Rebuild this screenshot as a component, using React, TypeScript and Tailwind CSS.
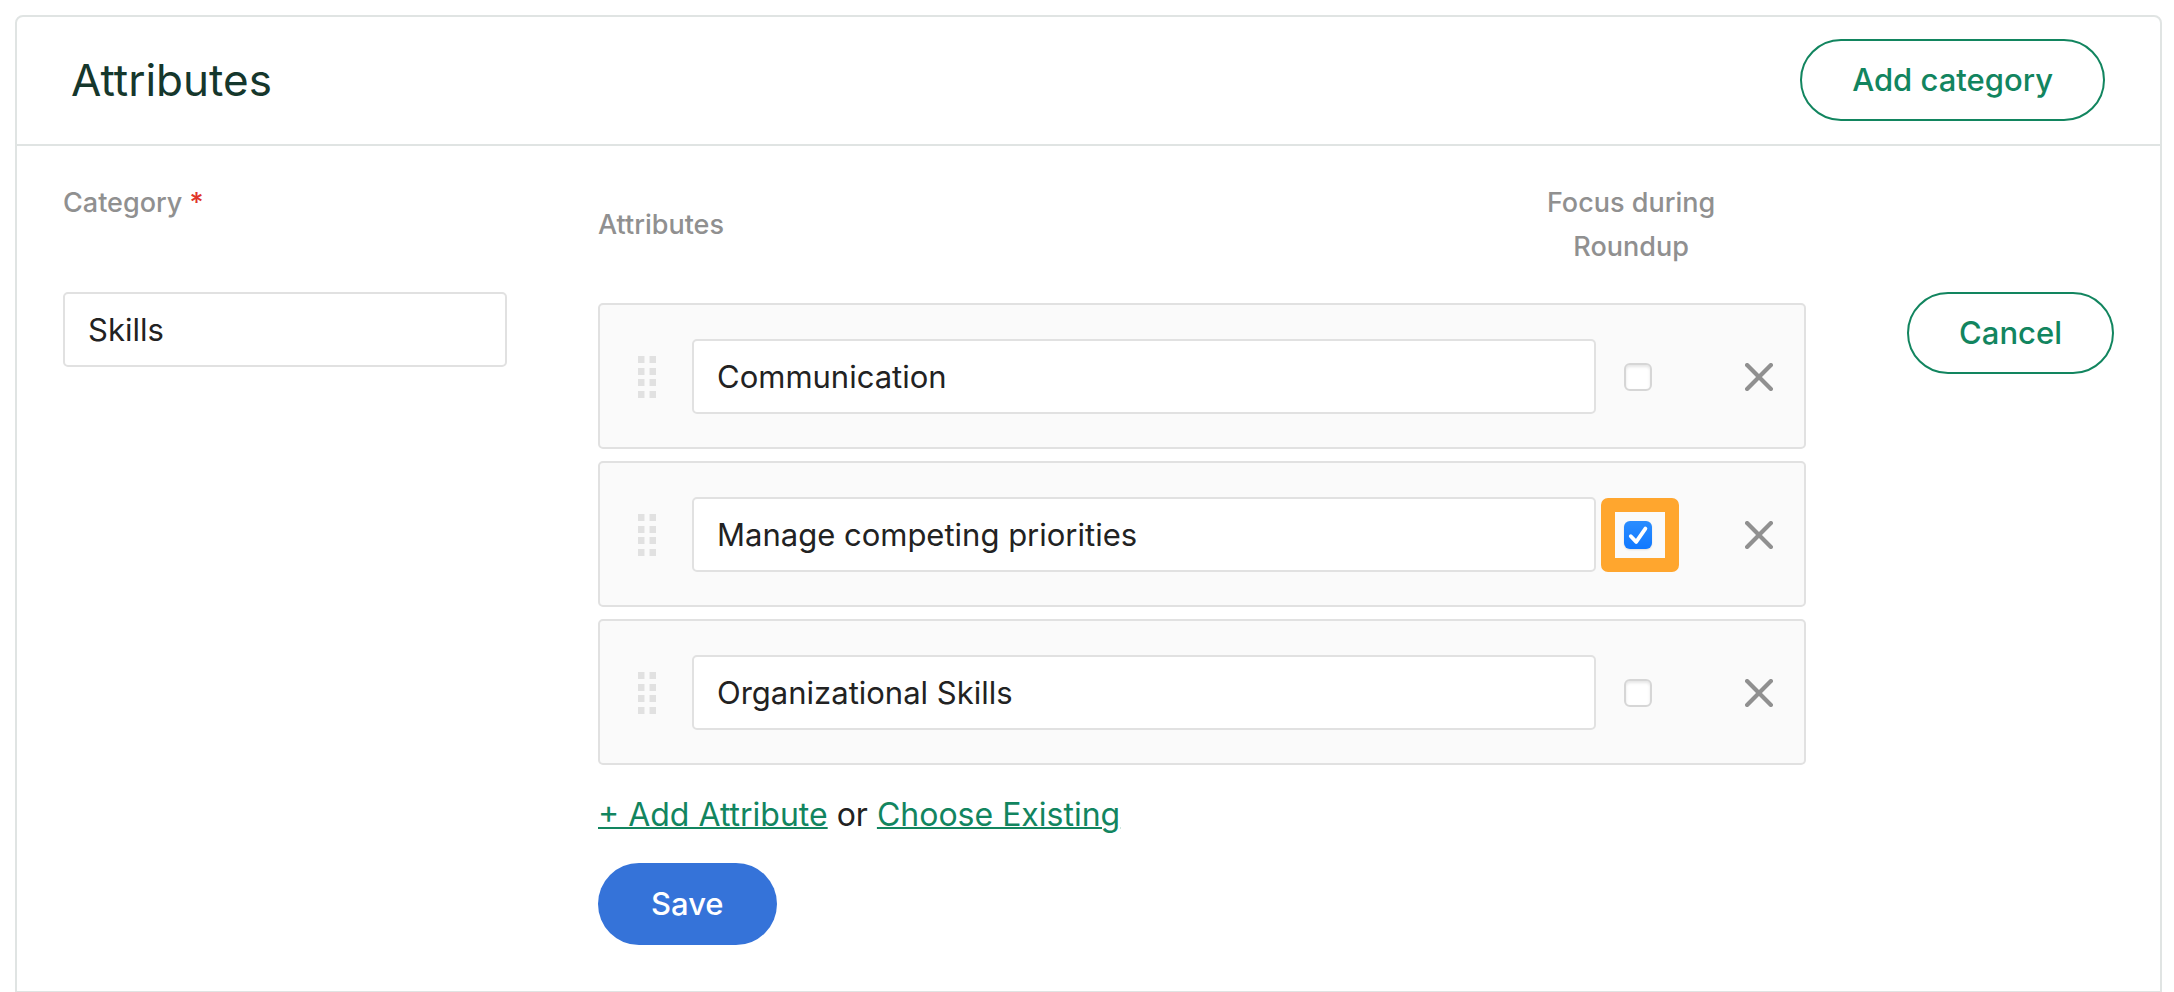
import { useState } from 'react'
import type { ReactNode } from 'react'

type Attribute = { id: number; name: string; focus: boolean; highlighted?: boolean }

const INITIAL: Attribute[] = [
  { id: 1, name: 'Communication', focus: false },
  { id: 2, name: 'Manage competing priorities', focus: true, highlighted: true },
  { id: 3, name: 'Organizational Skills', focus: false },
]

/* ── Icons ── */
function GripIcon() {
  return (
    <svg width="18" height="42" viewBox="0 0 18 42" fill="#e1e1e1" aria-hidden>
      {[0, 12, 23, 35].map((y) => (
        <g key={y}>
          <rect x="0" y={y} width="6.5" height="7" />
          <rect x="11.5" y={y} width="6.5" height="7" />
        </g>
      ))}
    </svg>
  )
}

function CloseIcon() {
  return (
    <svg width="28" height="28" viewBox="0 0 28 28" fill="none" stroke="#909090" strokeWidth="4.2" strokeLinecap="round" aria-hidden>
      <path d="M2.1 2.1l23.8 23.8M25.9 2.1L2.1 25.9" />
    </svg>
  )
}

function CheckIcon() {
  return (
    <svg
      className="pointer-events-none absolute inset-0 hidden peer-checked:block"
      width="28" height="28" viewBox="0 0 28 28" fill="none" stroke="#fff" strokeWidth="3.8" strokeLinecap="round" strokeLinejoin="round" aria-hidden
    >
      <path d="M6.8 15.2l5.4 5.7L21.4 7.6" />
    </svg>
  )
}

/* ── Outlined pill button ── */
function OutlineButton({ children }: { children: ReactNode }) {
  return (
    <button type="button" className="h-[82px] shrink-0 rounded-full border-2 border-[#12855f] px-[50px] text-[31px] font-medium whitespace-nowrap text-[#12855f]">
      {children}
    </button>
  )
}

function TextField({ id, label, value, onChange }: { id: string; label?: string; value: string; onChange: (v: string) => void }) {
  return (
    <input
      id={id}
      type="text"
      aria-label={label}
      value={value}
      onChange={(e) => onChange(e.target.value)}
      className="h-[75px] w-full min-w-0 rounded-[5px] border-2 border-[#e1e1e1] bg-white px-[23px] text-[31px] text-[#222]"
    />
  )
}

/* ── One draggable attribute row ── */
function AttributeRow({ attribute, onChange, onRemove }: {
  attribute: Attribute
  onChange: (patch: Partial<Attribute>) => void
  onRemove: () => void
}) {
  return (
    <li className="flex items-center rounded-[5px] border-2 border-[#e1e1e1] bg-[#fafafa] pt-[34px] pr-[31px] pb-[33px] pl-[38px]">
      <span className="mr-9 shrink-0 cursor-grab">
        <GripIcon />
      </span>
      <TextField
        id={`attribute-${attribute.id}`}
        label="Attribute"
        value={attribute.name}
        onChange={(name) => onChange({ name })}
      />
      <span className="relative ml-7 size-7 shrink-0">
        <input
          type="checkbox"
          aria-label={`Focus on ${attribute.name} during Roundup`}
          checked={attribute.focus}
          onChange={(e) => onChange({ focus: e.target.checked })}
          className="peer block size-7 appearance-none rounded-[6px] border-2 border-[#d6d6d6] bg-white shadow-[inset_0_2px_3px_rgba(0,0,0,0.1)] checked:border-0 checked:bg-linear-to-b checked:from-[#2a8dff] checked:to-[#0f78ff] checked:shadow-[0_1px_2px_rgba(0,0,0,0.12)]"
        />
        <CheckIcon />
        {attribute.highlighted && (
          <span className="pointer-events-none absolute -top-[23px] -left-[23px] h-[74px] w-[78px] rounded-[7px] border-14 border-[#ffa62e]" />
        )}
      </span>
      <button type="button" aria-label={`Remove ${attribute.name}`} onClick={onRemove} className="ml-[93px] shrink-0">
        <CloseIcon />
      </button>
    </li>
  )
}

export default function App() {
  const [category, setCategory] = useState('Skills')
  const [attributes, setAttributes] = useState(INITIAL)

  const update = (id: number, patch: Partial<Attribute>) =>
    setAttributes((list) => list.map((a) => (a.id === id ? { ...a, ...patch } : a)))
  const remove = (id: number) => setAttributes((list) => list.filter((a) => a.id !== id))

  return (
    <main className="bg-white pt-[15px] pr-3 pl-[15px] font-['Inter',sans-serif] text-[#222]">
      <section className="rounded-t-[8px] border-2 border-b border-[#e0e4e3]">
        <header className="flex items-center justify-between border-b-2 border-[#e0e4e3] pt-[22px] pr-[55px] pb-[23px] pl-[54px]">
          <h1 className="text-[44px] leading-[48px] text-[#15372c]">Attributes</h1>
          <OutlineButton>Add category</OutlineButton>
        </header>

        <form className="flex items-start px-[46px] pt-[35px] pb-[46px]" onSubmit={(e) => e.preventDefault()}>
          <div className="w-[444px]">
            <div className="h-[111px] text-[27px] leading-[44px] font-medium text-[#909090]">
              <label htmlFor="category">
                Category <span className="text-[#e0352b]">*</span>
              </label>
            </div>
            <TextField id="category" value={category} onChange={setCategory} />
          </div>

          <div className="mr-[101px] ml-[91px] min-w-0 flex-1">
            <div className="mb-[34px] flex items-center justify-between pr-[85px] text-[27px] leading-[44px] font-medium text-[#909090]">
              <span>Attributes</span>
              <span className="w-[180px] text-center">Focus during Roundup</span>
            </div>
            <ul className="flex flex-col gap-3">
              {attributes.map((a) => (
                <AttributeRow key={a.id} attribute={a} onChange={(patch) => update(a.id, patch)} onRemove={() => remove(a.id)} />
              ))}
            </ul>
            <p className="mt-7 text-[32px] leading-[44px]">
              <a href="#add" className="text-[#12855f] underline decoration-2">+ Add Attribute</a>
              {' or '}
              <a href="#existing" className="text-[#12855f] underline decoration-2">Choose Existing</a>
            </p>
            <button type="submit" className="mt-[26px] h-[82px] rounded-full bg-[#3573d9] px-[53px] text-[31px] font-medium text-white">
              Save
            </button>
          </div>

          <div className="pt-[111px]">
            <OutlineButton>Cancel</OutlineButton>
          </div>
        </form>
      </section>
    </main>
  )
}
